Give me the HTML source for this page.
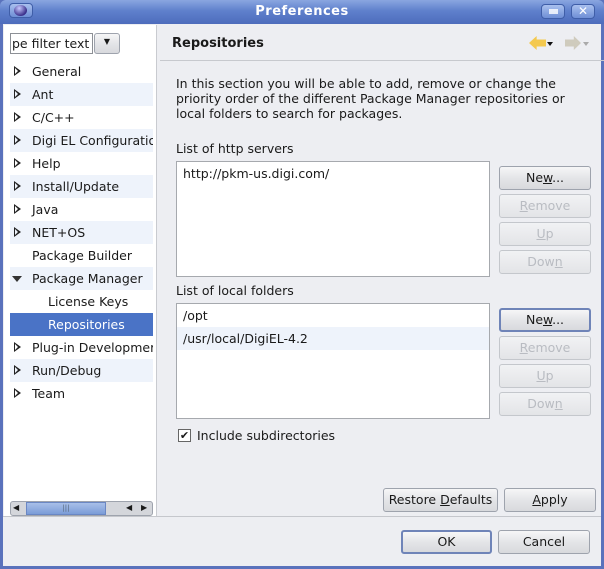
<!DOCTYPE html>
<html><head><style>
*{box-sizing:border-box;margin:0;padding:0}
body{width:604px;height:569px;overflow:hidden;background:#5a72bc;font-family:"DejaVu Sans","Liberation Sans",sans-serif;font-size:12.5px;color:#1a1a1a;position:relative}
.a{position:absolute}
#title{left:0;top:0;width:604px;height:24px;background:linear-gradient(#8aa6e0,#5f80cc 45%,#4d6cbc);border-radius:6px 6px 0 0}
#title .t{left:0;width:604px;top:4px;text-align:center;color:#fff;font-weight:bold;font-size:13px;letter-spacing:0.5px}
#client{left:3px;top:24px;width:598px;height:542px;background:#edeef2}
.tb{top:4px;width:24px;height:15px;border-radius:4px;background:linear-gradient(#a9c0ee,#6f8fd6);border:1px solid #3f5ea8}
#left{left:4px;top:25px;width:152px;height:491px;background:#fff}
.row{left:10px;width:143px;height:23px;line-height:23px}
.row.alt{background:#eef3fb}
.row span{position:absolute;left:22px}
.arr{position:absolute;left:4px;top:6px;width:0;height:0;border-top:5.5px solid transparent;border-bottom:5.5px solid transparent;border-left:7px solid #222}
.arr:after{content:"";position:absolute;left:-6px;top:-3px;border-top:3px solid transparent;border-bottom:3px solid transparent;border-left:3.5px solid #fff}
.alt .arr:after{border-left-color:#eef3fb}
.btn{height:24px;border:1px solid #9ea3ad;border-radius:3px;background:linear-gradient(#f6f6f7,#e4e5e8 50%,#d8d9dd);text-align:center;line-height:21px;font-size:12.5px}
.btn.dis{color:#b9bcc2;border-color:#c4c7cc;background:linear-gradient(#f1f2f4,#e3e4e7)}
.list{background:#fff;border:1px solid #a6a9ae}
</style></head><body>
<div id="title" class="a">
 <div class="a" style="left:9px;top:3px;width:24px;height:15px;border-radius:4px;background:linear-gradient(#a9c0ee,#6f8fd6);border:1px solid #3f5ea8"></div>
 <div class="a" style="left:14px;top:5px;width:13px;height:11px;border-radius:50%;background:radial-gradient(circle at 40% 30%,#c7c8ff,#3a2f8a 70%)"></div>
 <div class="a t">Preferences</div>
 <div class="a tb" style="left:541px"><div class="a" style="left:7px;top:4px;width:9px;height:5px;background:#fff;opacity:.8"></div></div>
 <div class="a tb" style="left:571px;color:#fff;font-weight:bold;font-size:12px;line-height:13px;text-align:center">✕</div>
</div>
<div id="client" class="a"></div>
<div class="a" style="left:156px;top:25px;width:1px;height:491px;background:#c9cbd0"></div>
<div id="left" class="a"></div>
<div class="a" style="left:10px;top:33px;width:83px;height:21px;border:1px solid #8d9096;background:#fff;line-height:19px;padding-left:1px;overflow:hidden;white-space:nowrap">pe filter text</div>
<div class="a btn" style="left:94px;top:33px;width:26px;height:21px;line-height:16px;font-size:8px">▼</div>

<div class="a row" style="top:60px"><i class="arr"></i><span>General</span></div>
<div class="a row alt" style="top:83px"><i class="arr"></i><span>Ant</span></div>
<div class="a row" style="top:106px"><i class="arr"></i><span>C/C++</span></div>
<div class="a row alt" style="top:129px;overflow:hidden;white-space:nowrap"><i class="arr"></i><span>Digi EL Configuratio</span></div>
<div class="a row" style="top:152px"><i class="arr"></i><span>Help</span></div>
<div class="a row alt" style="top:175px"><i class="arr"></i><span>Install/Update</span></div>
<div class="a row" style="top:198px"><i class="arr"></i><span>Java</span></div>
<div class="a row alt" style="top:221px"><i class="arr"></i><span>NET+OS</span></div>
<div class="a row" style="top:244px"><span>Package Builder</span></div>
<div class="a row alt" style="top:267px"><i class="a" style="left:2px;top:9px;border-left:5px solid transparent;border-right:5px solid transparent;border-top:6px solid #333"></i><span>Package Manager</span></div>
<div class="a row" style="top:290px"><span style="left:38px">License Keys</span></div>
<div class="a row" style="top:313px;background:#4a73c6;color:#fff"><span style="left:38px">Repositories</span></div>
<div class="a row" style="top:336px;overflow:hidden;white-space:nowrap"><i class="arr"></i><span>Plug-in Developmer</span></div>
<div class="a row alt" style="top:359px"><i class="arr"></i><span>Run/Debug</span></div>
<div class="a row" style="top:382px"><i class="arr"></i><span>Team</span></div>

<div class="a" style="left:10px;top:501px;width:143px;height:15px;border:1px solid #9ea3ad;border-radius:3px;background:#d4d6db"></div>
<div class="a" style="left:26px;top:502px;width:80px;height:13px;background:linear-gradient(#a8bfe8,#7b9cd8);border:1px solid #6a87c4;text-align:center;font-size:7px;line-height:11px;color:#567">|||</div>
<div class="a" style="left:13px;top:503px;font-size:8px">◀</div>
<div class="a" style="left:126px;top:503px;font-size:8px">◀</div>
<div class="a" style="left:141px;top:503px;font-size:8px">▶</div>

<div class="a" style="left:172px;top:36px;font-weight:bold;font-size:13px">Repositories</div>
<div class="a" style="left:529px;top:36px;width:17px;height:14px;background:#f4c94f;clip-path:polygon(0 50%,45% 0,45% 25%,100% 25%,100% 75%,45% 75%,45% 100%)"></div>
<div class="a" style="left:547px;top:42px;border-left:3.5px solid transparent;border-right:3.5px solid transparent;border-top:4px solid #111"></div>
<div class="a" style="left:565px;top:36px;width:16px;height:14px;background:#cfcbbd;clip-path:polygon(100% 50%,55% 0,55% 25%,0 25%,0 75%,55% 75%,55% 100%)"></div>
<div class="a" style="left:583px;top:42px;border-left:3.5px solid transparent;border-right:3.5px solid transparent;border-top:4px solid #aaa"></div>
<div class="a" style="left:160px;top:60px;width:444px;height:1px;background:#c7c9ce"></div>

<div class="a" style="left:176px;top:76px;line-height:15px">In this section you will be able to add, remove or change the<br>priority order of the different Package Manager repositories or<br>local folders to search for packages.</div>

<div class="a" style="left:176px;top:141px">List of http servers</div>
<div class="a list" style="left:176px;top:161px;width:314px;height:116px"><div style="padding:4px 6px">http://pkm-us.digi.com/</div></div>
<div class="a btn" style="left:499px;top:166px;width:92px">Ne<u>w</u>...</div>
<div class="a btn dis" style="left:499px;top:194px;width:92px"><u>R</u>emove</div>
<div class="a btn dis" style="left:499px;top:222px;width:92px"><u>U</u>p</div>
<div class="a btn dis" style="left:499px;top:250px;width:92px">Dow<u>n</u></div>

<div class="a" style="left:176px;top:283px">List of local folders</div>
<div class="a list" style="left:176px;top:303px;width:314px;height:116px">
 <div style="height:23px;line-height:23px;padding-left:6px">/opt</div>
 <div style="height:23px;line-height:23px;padding-left:6px;background:#eef3fb">/usr/local/DigiEL-4.2</div>
</div>
<div class="a btn" style="left:499px;top:308px;width:92px;border:2px solid #6f84b8;line-height:20px">Ne<u>w</u>...</div>
<div class="a btn dis" style="left:499px;top:336px;width:92px"><u>R</u>emove</div>
<div class="a btn dis" style="left:499px;top:364px;width:92px"><u>U</u>p</div>
<div class="a btn dis" style="left:499px;top:392px;width:92px">Dow<u>n</u></div>

<div class="a" style="left:178px;top:429px;width:13px;height:13px;border:1px solid #666;background:#fff;font-size:11px;line-height:11px;text-align:center;font-weight:bold">✔</div>
<div class="a" style="left:197px;top:428px">Include subdirectories</div>

<div class="a btn" style="left:383px;top:488px;width:115px">Restore <u>D</u>efaults</div>
<div class="a btn" style="left:504px;top:488px;width:92px"><u>A</u>pply</div>
<div class="a" style="left:3px;top:516px;width:598px;height:1px;background:#c5c7cc"></div>
<div class="a btn" style="left:401px;top:530px;width:91px;border:2px solid #6f84b8;line-height:20px">OK</div>
<div class="a btn" style="left:498px;top:530px;width:92px">Cancel</div>
</body></html>
